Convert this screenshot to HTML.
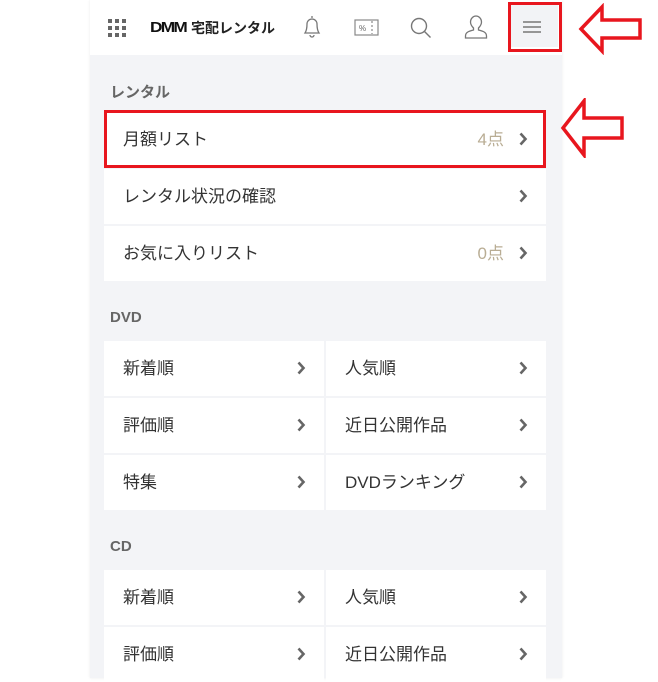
<!DOCTYPE html>
<html><head><meta charset="utf-8"><style>
*{margin:0;padding:0;box-sizing:border-box}
body{width:658px;height:678px;overflow:hidden;background:#fff;font-family:"Liberation Sans","Noto Sans CJK JP",sans-serif;position:relative}
.panel{position:absolute;left:90px;top:0;width:472px;height:678px;background:#f3f4f7;box-shadow:0 0 3px rgba(0,0,0,.08)}
.hdr{position:absolute;left:90px;top:0;width:472px;height:55px;background:#fff}
.lab{position:absolute;left:110px;font-size:15px;font-weight:bold;color:#666}
.it{position:absolute;background:#fff;height:55px;font-size:17px;color:#333;line-height:55px;padding-left:19px}
.ch{position:absolute;right:18px;top:20px;width:9px;height:14px}
.cnt{position:absolute;right:42px;color:#b9ad94;font-size:17px}
.red{position:absolute;border:3px solid #e8161e}
</style></head><body>
<div class="panel"></div>
<div class="hdr"></div>
<svg style="position:absolute;left:108px;top:19px" width="20" height="20"><g fill="#666"><rect x="0" y="0" width="4" height="4"/><rect x="7" y="0" width="4" height="4"/><rect x="14" y="0" width="4" height="4"/><rect x="0" y="7" width="4" height="4"/><rect x="7" y="7" width="4" height="4"/><rect x="14" y="7" width="4" height="4"/><rect x="0" y="14" width="4" height="4"/><rect x="7" y="14" width="4" height="4"/><rect x="14" y="14" width="4" height="4"/></g></svg>
<div style="position:absolute;left:150px;top:19px;font-size:15px;font-weight:900;color:#111;letter-spacing:-1.5px;transform:scaleX(1.15);transform-origin:left">DMM</div>
<div style="position:absolute;left:191px;top:18px;font-size:14px;color:#222;font-weight:bold">宅配レンタル</div>
<svg style="position:absolute;left:300px;top:14px" width="24" height="26" fill="none" stroke="#777" stroke-width="1.3"><path d="M12 2v2M5 19c2-3 2-6 2-9a5 5 0 0 1 10 0c0 3 0 6 2 9zM10 21a2 2 0 0 0 4 0"/></svg>
<svg style="position:absolute;left:354px;top:18px" width="26" height="20" fill="none" stroke="#888" stroke-width="1.2"><rect x="1" y="2" width="23" height="15"/><path d="M18 3v13" stroke-dasharray="2 2"/><text x="5" y="13" font-size="8" fill="#666" stroke="none" font-family="Liberation Sans">%</text></svg>
<svg style="position:absolute;left:409px;top:16px" width="24" height="24" fill="none" stroke="#777" stroke-width="1.4"><circle cx="10" cy="10" r="7.5"/><path d="M15.5 15.5l6 6"/></svg>
<svg style="position:absolute;left:463px;top:14px" width="26" height="26" fill="none" stroke="#777" stroke-width="1.3"><path d="M13 2a5.5 6 0 0 0-5.5 6c0 3 2 5 3 6v2c-4 1-8 2-8 6v2h21v-2c0-4-4-5-8-6v-2c1-1 3-3 3-6a5.5 6 0 0 0-5.5-6z"/></svg>
<div style="position:absolute;left:511px;top:5px;width:47px;height:42px;background:#f2f3f6"></div>
<svg style="position:absolute;left:522px;top:20px" width="20" height="14" stroke="#777" stroke-width="1.6"><path d="M1 2h18M1 7h18M1 12h18"/></svg>
<div class="red" style="left:508px;top:2px;width:54px;height:50px"></div>
<svg style="position:absolute;left:578px;top:3px" width="66" height="52" fill="none" stroke="#e8161e" stroke-width="3.5"><path d="M3 26L24 4v13h38v18H24v13z"/></svg>
<svg style="position:absolute;left:560px;top:98px" width="66" height="60" fill="none" stroke="#e8161e" stroke-width="3.5"><path d="M3 30L24 3v17h38v20H24v17z"/></svg>

<div class="lab" style="top:81px">レンタル</div>
<div class="it" style="left:104px;top:112px;width:442px">月額リスト<span class="cnt">4点</span><svg class="ch" viewBox="0 0 9 14"><path d="M1.5 1.5l5 5.5-5 5.5" fill="none" stroke="#666" stroke-width="2.6"/></svg></div>
<div class="red" style="left:104px;top:110px;width:442px;height:58px"></div>
<div class="it" style="left:104px;top:169px;width:442px">レンタル状況の確認<svg class="ch" viewBox="0 0 9 14"><path d="M1.5 1.5l5 5.5-5 5.5" fill="none" stroke="#666" stroke-width="2.6"/></svg></div>
<div class="it" style="left:104px;top:226px;width:442px">お気に入りリスト<span class="cnt">0点</span><svg class="ch" viewBox="0 0 9 14"><path d="M1.5 1.5l5 5.5-5 5.5" fill="none" stroke="#666" stroke-width="2.6"/></svg></div>

<div class="lab" style="top:309px">DVD</div>
<div class="it" style="left:104px;top:341px;width:220px">新着順<svg class="ch" viewBox="0 0 9 14"><path d="M1.5 1.5l5 5.5-5 5.5" fill="none" stroke="#666" stroke-width="2.6"/></svg></div>
<div class="it" style="left:326px;top:341px;width:220px">人気順<svg class="ch" viewBox="0 0 9 14"><path d="M1.5 1.5l5 5.5-5 5.5" fill="none" stroke="#666" stroke-width="2.6"/></svg></div>
<div class="it" style="left:104px;top:398px;width:220px">評価順<svg class="ch" viewBox="0 0 9 14"><path d="M1.5 1.5l5 5.5-5 5.5" fill="none" stroke="#666" stroke-width="2.6"/></svg></div>
<div class="it" style="left:326px;top:398px;width:220px">近日公開作品<svg class="ch" viewBox="0 0 9 14"><path d="M1.5 1.5l5 5.5-5 5.5" fill="none" stroke="#666" stroke-width="2.6"/></svg></div>
<div class="it" style="left:104px;top:455px;width:220px">特集<svg class="ch" viewBox="0 0 9 14"><path d="M1.5 1.5l5 5.5-5 5.5" fill="none" stroke="#666" stroke-width="2.6"/></svg></div>
<div class="it" style="left:326px;top:455px;width:220px">DVDランキング<svg class="ch" viewBox="0 0 9 14"><path d="M1.5 1.5l5 5.5-5 5.5" fill="none" stroke="#666" stroke-width="2.6"/></svg></div>

<div class="lab" style="top:538px">CD</div>
<div class="it" style="left:104px;top:570px;width:220px">新着順<svg class="ch" viewBox="0 0 9 14"><path d="M1.5 1.5l5 5.5-5 5.5" fill="none" stroke="#666" stroke-width="2.6"/></svg></div>
<div class="it" style="left:326px;top:570px;width:220px">人気順<svg class="ch" viewBox="0 0 9 14"><path d="M1.5 1.5l5 5.5-5 5.5" fill="none" stroke="#666" stroke-width="2.6"/></svg></div>
<div class="it" style="left:104px;top:627px;width:220px">評価順<svg class="ch" viewBox="0 0 9 14"><path d="M1.5 1.5l5 5.5-5 5.5" fill="none" stroke="#666" stroke-width="2.6"/></svg></div>
<div class="it" style="left:326px;top:627px;width:220px">近日公開作品<svg class="ch" viewBox="0 0 9 14"><path d="M1.5 1.5l5 5.5-5 5.5" fill="none" stroke="#666" stroke-width="2.6"/></svg></div>
</body></html>
